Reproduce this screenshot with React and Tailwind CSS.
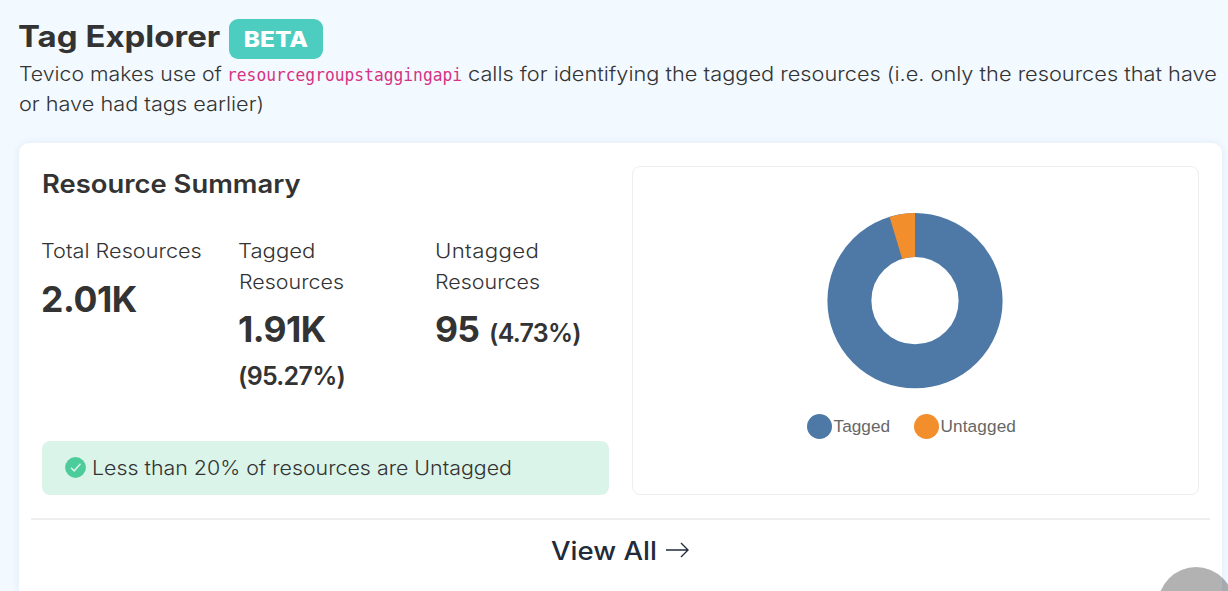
function Header() {
  return (
    <header className="pl-[19px]">
      <div className="flex h-[59px] items-end">
        <h1 className="-ml-px h-[45px] w-[211px] origin-left scale-x-[1.118] text-[29.5px] leading-[45px] font-bold whitespace-nowrap">
          Tag Explorer
        </h1>
        <span className="flex h-10 w-[94px] items-center justify-center rounded-[9px] bg-[#4dccc0] text-[22px] font-extrabold text-white">
          <span className="scale-x-[1.11]">BETA</span>
        </span>
      </div>
      <p className="text-[19.5px] leading-[30px] font-light whitespace-nowrap">
        <span className="flex h-[30px]">
          <span className="w-[208px] origin-left scale-x-[1.09]">Tevico makes use of</span>
          <code className="w-[241px] origin-left scale-x-[0.957] pt-px font-['DejaVu_Sans_Mono',monospace] text-[17px] font-normal text-[#d63384]">
            resourcegroupstaggingapi
          </code>
          <span className="w-[671px] origin-left scale-x-[1.116]">
            calls for identifying the tagged resources (i.e. only the resources that have
          </span>
        </span>
        <span className="block w-[220px] origin-left scale-x-[1.113]">or have had tags earlier)</span>
      </p>
    </header>
  );
}

function Summary() {
  return (
    <section className="flex h-[329px] w-[567px] flex-col">
      <h2 className="h-[70px] w-[236px] origin-left scale-x-[1.096] text-[25px] leading-[37px] font-semibold whitespace-nowrap">
        Resource Summary
      </h2>
      <div className="grid flex-1 grid-cols-[197px_197px_173px] text-[19.5px] leading-[31px] font-light">
        <div>
          <p className="-ml-px origin-left scale-x-[1.112]">Total Resources</p>
          <p className="-ml-px text-[35.5px] leading-[66px] font-bold tracking-[-0.4px]">2.01K</p>
        </div>
        <div>
          <p className="-ml-px origin-left scale-x-[1.135]">Tagged</p>
          <p className="origin-left scale-x-[1.1]">Resources</p>
          <p className="-ml-px h-[62px] text-[35.5px] leading-[64px] font-bold tracking-[-0.6px]">1.91K</p>
          <p className="-ml-px text-[25px] leading-[32px] font-semibold tracking-[-0.7px]">(95.27%)</p>
        </div>
        <div>
          <p className="-ml-px origin-left scale-x-[1.14] tracking-[0.3px]">Untagged</p>
          <p className="-ml-px origin-left scale-x-[1.1]">Resources</p>
          <p className="-ml-px flex items-baseline text-[35.5px] leading-[64px] font-bold tracking-[-0.7px]">
            <span className="w-[54px]">95</span>
            <span className="text-[25px] font-semibold tracking-[-0.7px]">(4.73%)</span>
          </p>
        </div>
      </div>
      <div className="flex h-[54px] items-center rounded-lg bg-[#dbf4e9] pl-[23px]">
        <svg className="mr-[6px] mb-[2px] size-[21px]" viewBox="0 0 21 21" fill="none">
          <circle cx="10.5" cy="10.5" r="10.4" fill="#4dcc9b" />
          <path d="M6 10.7 9.2 13.8 15.5 6.8" stroke="#dbf4e9" strokeWidth="1.5" />
        </svg>
        <span className="origin-left scale-x-[1.096] pt-[2px] text-[19.5px] font-light">
          Less than 20% of resources are Untagged
        </span>
      </div>
    </section>
  );
}

function Chart() {
  return (
    <section className="flex h-[329px] w-[567px] flex-col items-center rounded-lg border border-[#eeeeee] pt-[45px]">
      <svg className="mr-px size-[178px]" viewBox="0 0 178 178" fill="none">
        <circle cx="89" cy="88.7" r="65.6" stroke="#4e79a7" strokeWidth="44" />
        <path d="M89 1.1A87.6 87.6 0 0 0 63.6 4.9L76.2 46.9A43.6 43.6 0 0 1 89 45.1Z" fill="#f28e2b" />
      </svg>
      <div className="mt-[23px] mr-[8px] flex h-[26px] w-[210px] font-['Liberation_Sans',sans-serif] text-[17.2px] text-[#666666]">
        <span className="flex w-[107px] shrink-0 items-center gap-[2px]">
          <i className="size-[25px] shrink-0 rounded-full bg-[#4e79a7]" />
          <span className="pt-[2px] tracking-[0.05px]">Tagged</span>
        </span>
        <span className="flex items-center gap-[2px]">
          <i className="size-[25px] shrink-0 rounded-full bg-[#f28e2b]" />
          <span className="pt-[2px] tracking-[0.12px]">Untagged</span>
        </span>
      </div>
    </section>
  );
}

export default function App() {
  return (
    <main className="relative h-[591px] w-full overflow-hidden bg-[#f2f9ff] font-['Inter',sans-serif] text-[#333333]">
      <Header />
      <div className="mt-6 ml-[19px] h-[480px] w-[1203px] rounded-[10px] bg-white px-3 pt-[23px] shadow-[0_0_10px_rgba(0,60,100,0.07)]">
        <div className="flex justify-between px-[11px]">
          <Summary />
          <Chart />
        </div>
        <hr className="mt-[23px] border-t-2 border-[#eeeeee]" />
        <a className="flex h-[64px] items-center justify-center pr-[2px] text-[25px] font-medium text-[#212c3a]">
          <span className="w-[115px] origin-left scale-x-[1.104] whitespace-nowrap">View All</span>
          <svg className="mb-[4px] h-4 w-[23px]" viewBox="0 0 23 16" fill="none" stroke="currentColor" strokeWidth="1.4">
            <path d="M0 8H22.3M15 1 22.1 8 15 15" />
          </svg>
        </a>
      </div>
      <div className="absolute top-[567px] left-[1158px] size-[76px] rounded-full bg-black/30" />
    </main>
  );
}
